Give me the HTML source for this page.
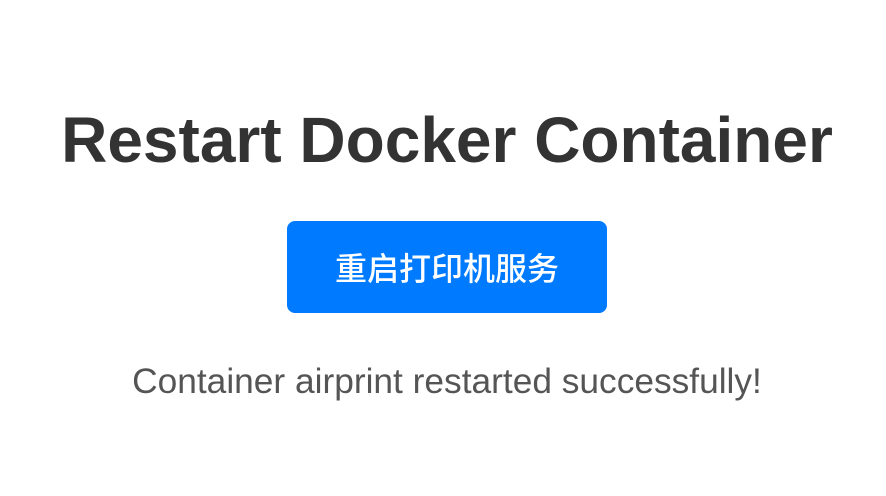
<!DOCTYPE html>
<html><head><meta charset="utf-8"><style>
html,body{margin:0;padding:0;background:#fff;width:886px;height:496px;overflow:hidden}
body{font-family:"Liberation Sans","Noto Sans CJK SC",sans-serif;position:relative}
h1{position:absolute;left:8px;width:878px;top:0;margin:0;text-align:center;font-size:64px;font-weight:bold;color:#333;line-height:64px;padding-top:108px}
.btn{position:absolute;left:287px;top:221px;width:320px;height:92px;background:#007bff;border-radius:8px;color:#fff;font-size:32px;line-height:96px;text-align:center;font-family:"Liberation Sans","Noto Sans CJK SC",sans-serif;font-weight:500}
p{position:absolute;left:8px;width:878px;top:358px;margin:0;text-align:center;font-size:35.3px;line-height:48px;color:#555}
</style></head><body>
<h1>Restart Docker Container</h1>
<div class="btn">重启打印机服务</div>
<p>Container airprint restarted successfully!</p>
</body></html>
